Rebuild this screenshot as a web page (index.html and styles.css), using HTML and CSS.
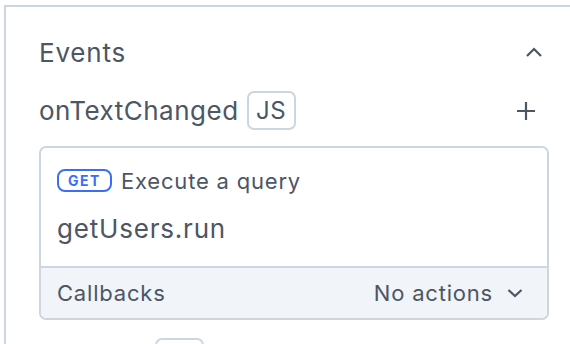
FILE: index.html
```html
<!DOCTYPE html>
<html lang="en">
<head>
    <meta charset="UTF-8">
    <meta name="viewport" content="width=device-width, initial-scale=1.0">
    <title>Events</title>
    <link rel="stylesheet" href="styles.css">
</head>
<body>

    <div class="panel">
        <div class="section-head">
            <span class="section-title">Events</span>
            <svg class="icon chevron-up" width="18" height="12" viewBox="0 0 18 12">
                <path d="M2 10 L9 3 L16 10" fill="none" stroke="#4c5664" stroke-width="2.2"/>
            </svg>
        </div>

        <div class="event-row">
            <span class="event-name">onTextChanged</span>
            <span class="js-badge">JS</span>
            <svg class="icon plus" width="20" height="20" viewBox="0 0 20 20">
                <path d="M10 1 V19 M1 10 H19" fill="none" stroke="#4c5664" stroke-width="2.2"/>
            </svg>
        </div>

        <div class="action-card">
            <div class="action-body">
                <div class="action-type">
                    <span class="get-badge">GET</span>
                    <span>Execute a query</span>
                </div>
                <div class="action-name">getUsers.run</div>
            </div>
            <div class="callbacks">
                <span>Callbacks</span>
                <span class="callbacks-value">
                    No actions
                    <svg class="icon" width="16" height="10" viewBox="0 0 16 10">
                        <path d="M1.5 2 L8 8 L14.5 2" fill="none" stroke="#4c5664" stroke-width="2.2"/>
                    </svg>
                </span>
            </div>
        </div>

        <div class="event-row next-row">
            <span class="event-name">onFocus</span>
            <span class="js-badge">JS</span>
        </div>
    </div>

</body>
</html>
```

FILE: styles.css
```css
body {
    margin: 0;
    background-color: white;
    font-family: Inter, "Noto Sans", sans-serif;
    color: #4c5664;
    overflow: hidden;
}

.panel {
    margin: 5px 0 0 4px;
    border-left: 2px solid #cdd5df;
    border-top: 2px solid #cdd5df;
    padding: 29px 21px 0 33px;
}

.section-head {
    display: flex;
    align-items: center;
    justify-content: space-between;
    height: 32px;
}

.section-title {
    font-size: 26px;
    letter-spacing: 0.8px;
}

.chevron-up {
    margin-right: 6px;
}

.event-row {
    display: flex;
    align-items: center;
    height: 39px;
    margin-top: 23px;
}

.event-name {
    font-size: 26px;
    letter-spacing: 0.5px;
    margin-right: 8px;
}

.js-badge {
    display: flex;
    align-items: center;
    justify-content: center;
    box-sizing: border-box;
    width: 49px;
    height: 39px;
    border: 2px solid #cdd5df;
    border-radius: 7px;
    font-size: 24px;
    letter-spacing: 0.5px;
}

.plus {
    margin-left: auto;
    margin-right: 13px;
}

.action-card {
    margin-top: 16px;
    border: 2px solid #cdd5df;
    border-radius: 7px;
    overflow: hidden;
}

.action-body {
    padding: 21px 16px 22px;
}

.action-type {
    display: flex;
    align-items: center;
    gap: 9px;
    font-size: 22px;
    letter-spacing: 0.8px;
    height: 23px;
}

.get-badge {
    display: flex;
    align-items: center;
    justify-content: center;
    box-sizing: border-box;
    width: 55px;
    height: 23px;
    border: 2px solid #3b6ef5;
    border-radius: 8px;
    color: #3b6ef5;
    font-size: 14px;
    font-weight: 700;
    letter-spacing: 1.5px;
}

.action-name {
    font-size: 26px;
    letter-spacing: 0.8px;
    height: 30px;
    line-height: 30px;
    margin-top: 22px;
}

.callbacks {
    display: flex;
    align-items: center;
    justify-content: space-between;
    height: 50px;
    border-top: 2px solid #cdd5df;
    background-color: #f1f4f8;
    padding: 0 24px 0 16px;
    font-size: 22px;
    letter-spacing: 0.8px;
}

.callbacks-value {
    display: flex;
    align-items: center;
    gap: 14px;
}

.next-row {
    margin-top: 18px;
}
```
